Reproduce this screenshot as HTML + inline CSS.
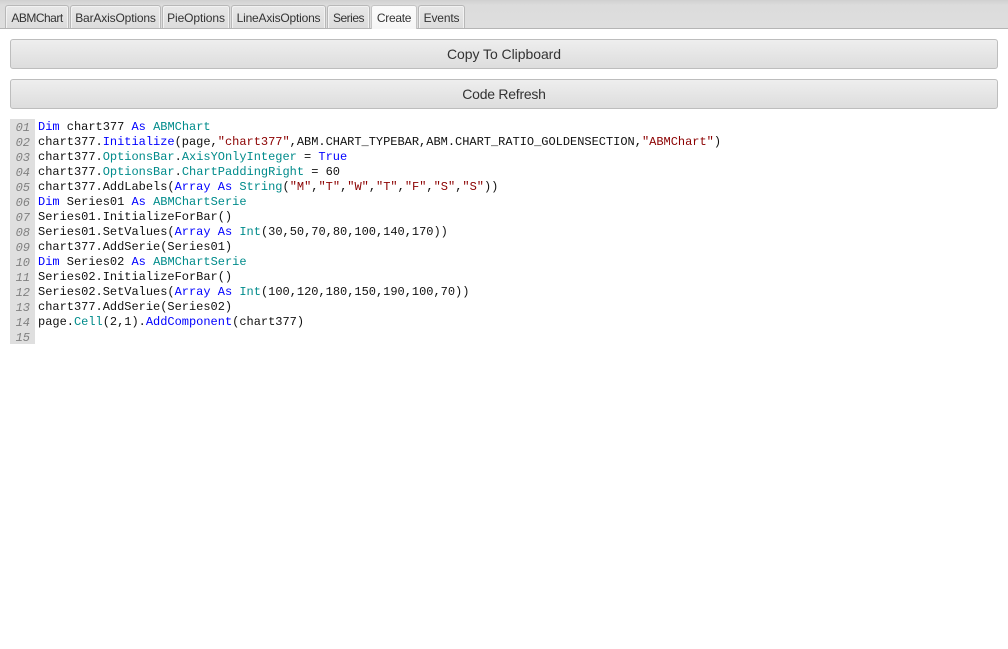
<!DOCTYPE html>
<html><head><meta charset="utf-8">
<style>
html,body{margin:0;padding:0;background:#fff;width:1008px;height:649px;overflow:hidden;position:relative}
body{font-family:"Liberation Sans",sans-serif;color:#333}
#bar{position:absolute;left:0;top:0;width:1008px;height:28px;background:linear-gradient(#d0d0d0,#dcdcdc 5px,#dedede);border-bottom:1px solid #b5b5b5}
.tab{position:absolute;top:5px;height:23px;box-sizing:border-box;background:linear-gradient(#e8e8e8,#dcdcdc);border:1px solid #b8b8b8;border-bottom:none;border-radius:3px 3px 0 0;box-shadow:inset 1px 1px 0 #f2f2f2,inset -1px 0 0 #f2f2f2;text-align:center;font-size:12px;line-height:24px;color:#333;white-space:nowrap}
.tab.on{background:linear-gradient(#fbfbfb,#f6f6f6);height:24px;border-color:#c4c4c4;box-shadow:none}
.btn{position:absolute;left:10px;width:988px;height:30px;box-sizing:border-box;border:1px solid #bdbdbd;border-radius:3px;background:linear-gradient(#eeeeee,#dddddd);text-align:center;font-size:14px;line-height:28px;color:#333}
#nums{position:absolute;left:10px;top:119px;width:25px;height:225px;background:#dfdfdf}
.n{position:absolute;left:0;width:20px;text-align:right;font:italic 12px/15px "Liberation Mono",monospace;color:#808080}
.l{position:absolute;left:38px;font:12px/15px "Liberation Mono",monospace;letter-spacing:-.012px;color:#111;white-space:pre}
.k{color:#0000ff}.t{color:#008b8b}.s{color:#8b0000}.m{color:#0000ff}
</style></head><body>
<div id="bar"></div>
<div class="tab" style="left:5px;width:64px;letter-spacing:-.5px">ABMChart</div>
<div class="tab" style="left:70px;width:91px;letter-spacing:-.15px">BarAxisOptions</div>
<div class="tab" style="left:162px;width:68px;letter-spacing:-.1px">PieOptions</div>
<div class="tab" style="left:231px;width:95px;letter-spacing:-.2px">LineAxisOptions</div>
<div class="tab" style="left:327px;width:43px;letter-spacing:-.5px">Series</div>
<div class="tab on" style="left:371px;width:46px;letter-spacing:-.3px">Create</div>
<div class="tab" style="left:418px;width:47px;letter-spacing:-.15px">Events</div>
<div class="btn" style="top:39px;letter-spacing:-.05px">Copy To Clipboard</div>
<div class="btn" style="top:79px;letter-spacing:-.25px">Code Refresh</div>
<div id="nums">
<div class="n" style="top:2px">01</div><div class="n" style="top:17px">02</div><div class="n" style="top:32px">03</div><div class="n" style="top:47px">04</div><div class="n" style="top:62px">05</div><div class="n" style="top:77px">06</div><div class="n" style="top:92px">07</div><div class="n" style="top:107px">08</div><div class="n" style="top:122px">09</div><div class="n" style="top:137px">10</div><div class="n" style="top:152px">11</div><div class="n" style="top:167px">12</div><div class="n" style="top:182px">13</div><div class="n" style="top:197px">14</div><div class="n" style="top:212px">15</div>
</div>
<div class="l" style="top:120px"><span class="k">Dim</span> chart377 <span class="k">As</span> <span class="t">ABMChart</span></div>
<div class="l" style="top:135px">chart377.<span class="m">Initialize</span>(page,<span class="s">"chart377"</span>,ABM.CHART_TYPEBAR,ABM.CHART_RATIO_GOLDENSECTION,<span class="s">"ABMChart"</span>)</div>
<div class="l" style="top:150px">chart377.<span class="t">OptionsBar</span>.<span class="t">AxisYOnlyInteger</span> = <span class="k">True</span></div>
<div class="l" style="top:165px">chart377.<span class="t">OptionsBar</span>.<span class="t">ChartPaddingRight</span> = 60</div>
<div class="l" style="top:180px">chart377.AddLabels(<span class="k">Array</span> <span class="k">As</span> <span class="t">String</span>(<span class="s">"M"</span>,<span class="s">"T"</span>,<span class="s">"W"</span>,<span class="s">"T"</span>,<span class="s">"F"</span>,<span class="s">"S"</span>,<span class="s">"S"</span>))</div>
<div class="l" style="top:195px"><span class="k">Dim</span> Series01 <span class="k">As</span> <span class="t">ABMChartSerie</span></div>
<div class="l" style="top:210px">Series01.InitializeForBar()</div>
<div class="l" style="top:225px">Series01.SetValues(<span class="k">Array</span> <span class="k">As</span> <span class="t">Int</span>(30,50,70,80,100,140,170))</div>
<div class="l" style="top:240px">chart377.AddSerie(Series01)</div>
<div class="l" style="top:255px"><span class="k">Dim</span> Series02 <span class="k">As</span> <span class="t">ABMChartSerie</span></div>
<div class="l" style="top:270px">Series02.InitializeForBar()</div>
<div class="l" style="top:285px">Series02.SetValues(<span class="k">Array</span> <span class="k">As</span> <span class="t">Int</span>(100,120,180,150,190,100,70))</div>
<div class="l" style="top:300px">chart377.AddSerie(Series02)</div>
<div class="l" style="top:315px">page.<span class="t">Cell</span>(2,1).<span class="m">AddComponent</span>(chart377)</div>
</body></html>
